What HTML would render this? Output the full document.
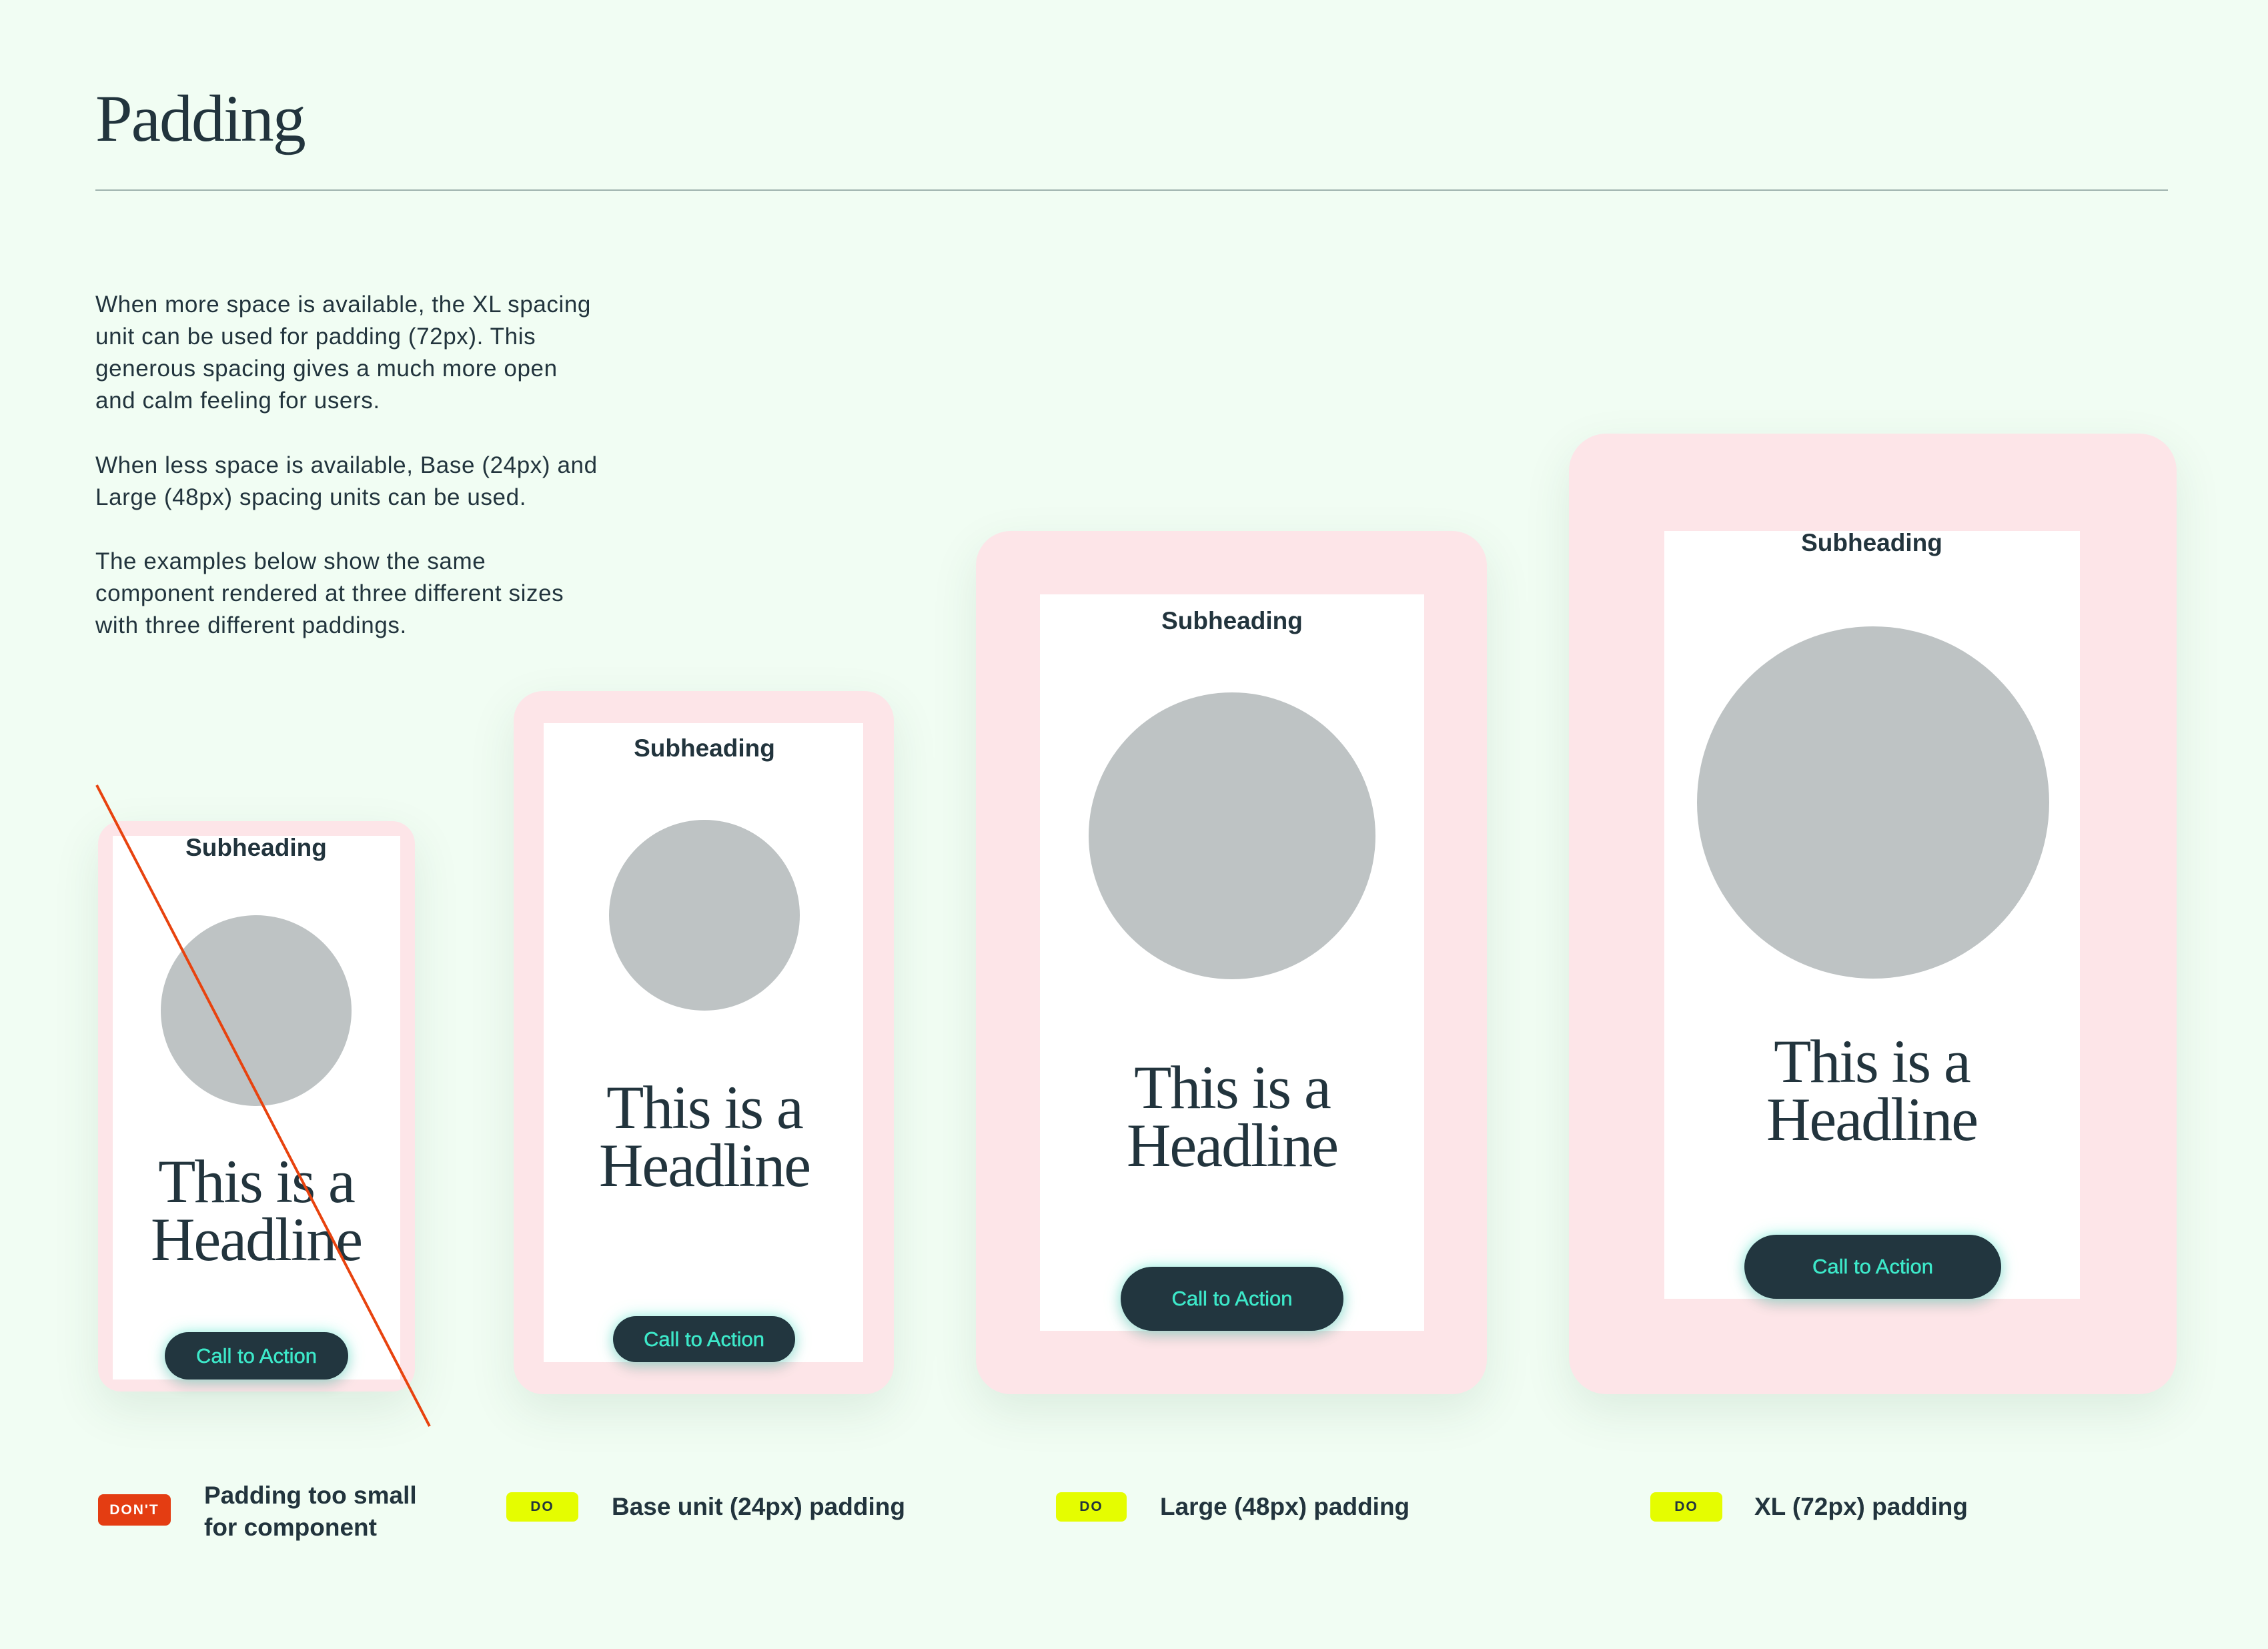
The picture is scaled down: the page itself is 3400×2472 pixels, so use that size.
<!DOCTYPE html>
<html><head><meta charset="utf-8"><style>
*{margin:0;padding:0;box-sizing:border-box}
body{width:3400px;height:2472px;background:#f1fdf3;position:relative;overflow:hidden;font-family:"Liberation Sans",sans-serif;color:#22343d}
.a{position:absolute}
h1{position:absolute;left:143px;top:128px;font-family:"Liberation Serif",serif;font-weight:normal;font-size:100px;letter-spacing:-2px;color:#22343d;line-height:1}
.rule{left:143px;top:284px;width:3107px;height:2px;background:#9fb2ae}
.p{left:143px;width:752px;font-size:35px;line-height:48px;color:#22343d;letter-spacing:0.6px}
.pink{background:#fde5e8;box-shadow:0 25px 70px rgba(40,90,60,0.10)}
.white{background:#fff}
.sub{font-size:37px;font-weight:bold;text-align:center;width:700px;line-height:1;color:#22343d}
.circ{border-radius:50%;background:#bec3c4}
.hl{font-family:"Liberation Serif",serif;font-size:92px;line-height:87px;letter-spacing:-2px;text-align:center;width:700px;color:#22343d}
.btn{background:#22363f;border-radius:50px;color:#3de8c9;font-size:31px;display:flex;align-items:center;justify-content:center;box-shadow:0 0 22px rgba(60,235,205,0.55),0 10px 20px rgba(0,0,0,0.12);-webkit-text-stroke:0.5px #3de8c9}
.badge{font-size:21px;font-weight:bold;letter-spacing:2px;display:flex;align-items:center;justify-content:center;border-radius:8px}
.do{background:#e5fd00;color:#22343d}
.dont{background:#e43d12;color:#fff}
.lab{font-size:37px;line-height:48px;color:#22343d;font-weight:bold}
</style></head><body>
<h1>Padding</h1>
<div class="a rule"></div>
<div class="a p" style="top:433px">When more space is available, the XL spacing unit can be used for padding (72px). This generous spacing gives a much more open and calm feeling for users.</div>
<div class="a p" style="top:674px;width:790px">When less space is available, Base (24px) and Large (48px) spacing units can be used.</div>
<div class="a p" style="top:818px">The examples below show the same component rendered at three different sizes with three different paddings.</div>

<div class="a pink" style="left:147px;top:1231px;width:475px;height:855px;border-radius:34px"></div>
<div class="a white" style="left:169px;top:1253px;width:431px;height:815px"></div>
<div class="a sub" style="left:34px;top:1252px">Subheading</div>
<div class="a circ" style="left:241px;top:1372px;width:286px;height:286px"></div>
<div class="a hl" style="left:34px;top:1728px">This is a<br>Headline</div>
<div class="a btn" style="left:247px;top:1997px;width:275px;height:71px">Call to Action</div>

<div class="a pink" style="left:770px;top:1036px;width:570px;height:1054px;border-radius:44px"></div>
<div class="a white" style="left:815px;top:1084px;width:479px;height:958px"></div>
<div class="a sub" style="left:706px;top:1103px">Subheading</div>
<div class="a circ" style="left:913px;top:1229px;width:286px;height:286px"></div>
<div class="a hl" style="left:706px;top:1617px">This is a<br>Headline</div>
<div class="a btn" style="left:919px;top:1973px;width:273px;height:69px">Call to Action</div>

<div class="a pink" style="left:1463px;top:796px;width:766px;height:1294px;border-radius:52px"></div>
<div class="a white" style="left:1559px;top:891px;width:576px;height:1104px"></div>
<div class="a sub" style="left:1497px;top:912px">Subheading</div>
<div class="a circ" style="left:1632px;top:1038px;width:430px;height:430px"></div>
<div class="a hl" style="left:1497px;top:1587px">This is a<br>Headline</div>
<div class="a btn" style="left:1680px;top:1899px;width:334px;height:96px;border-radius:50px">Call to Action</div>

<div class="a pink" style="left:2352px;top:650px;width:911px;height:1440px;border-radius:56px"></div>
<div class="a white" style="left:2495px;top:796px;width:623px;height:1151px"></div>
<div class="a sub" style="left:2456px;top:795px">Subheading</div>
<div class="a circ" style="left:2544px;top:939px;width:528px;height:528px"></div>
<div class="a hl" style="left:2456px;top:1548px">This is a<br>Headline</div>
<div class="a btn" style="left:2615px;top:1851px;width:385px;height:96px;border-radius:50px">Call to Action</div>

<svg class="a" style="left:0;top:0" width="3400" height="2472"><line x1="145" y1="1177" x2="644" y2="2138" stroke="#e8430f" stroke-width="4"/></svg>

<div class="a badge dont" style="left:147px;top:2240px;width:109px;height:47px">DON'T</div>
<div class="a lab" style="left:306px;top:2218px">Padding too small<br>for component</div>
<div class="a badge do" style="left:759px;top:2237px;width:108px;height:44px">DO</div>
<div class="a lab" style="left:917px;top:2235px">Base unit (24px) padding</div>
<div class="a badge do" style="left:1583px;top:2237px;width:106px;height:44px">DO</div>
<div class="a lab" style="left:1739px;top:2235px">Large (48px) padding</div>
<div class="a badge do" style="left:2474px;top:2237px;width:108px;height:44px">DO</div>
<div class="a lab" style="left:2630px;top:2235px">XL (72px) padding</div>
</body></html>
